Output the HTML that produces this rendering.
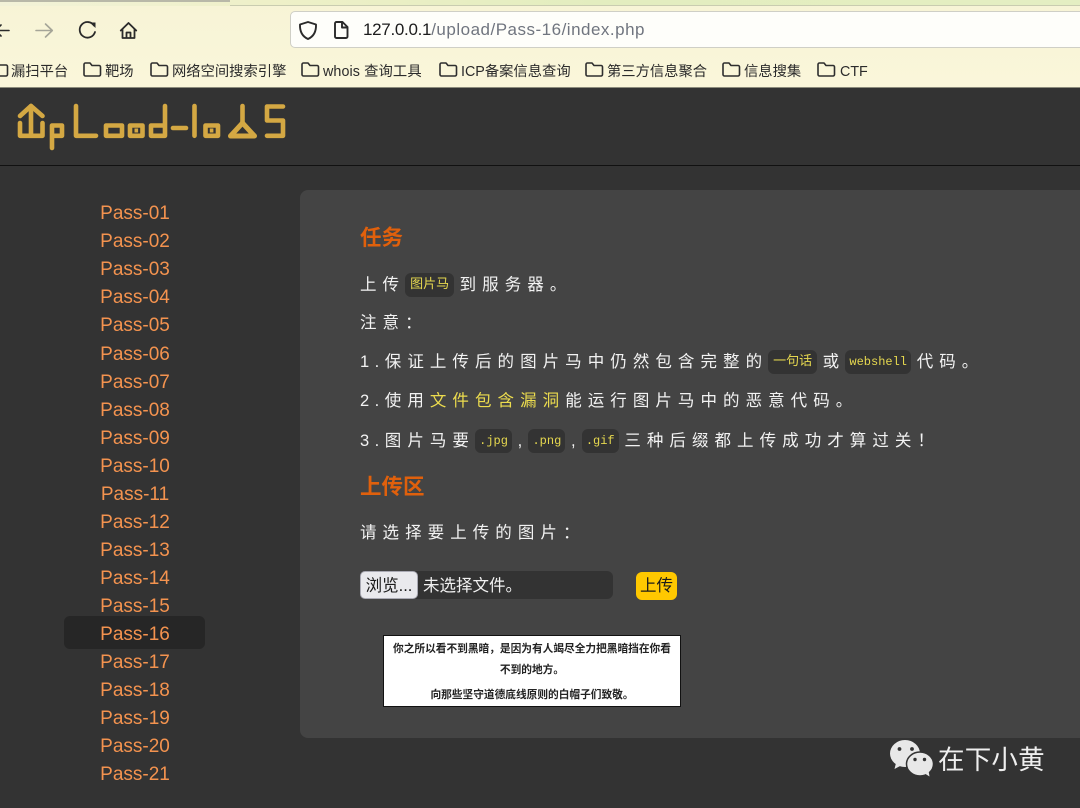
<!DOCTYPE html>
<html lang="zh"><head><meta charset="utf-8"><title>Upload-labs</title>
<style>
html,body{margin:0;padding:0;width:1080px;height:808px;overflow:hidden;background:#333}
body{position:relative;font-family:"Liberation Sans","Noto Sans CJK SC",sans-serif}
.a{position:absolute;white-space:nowrap}
.top{left:0;top:0;width:1080px;height:88px;background:linear-gradient(180deg,#f7f4d6 0,#faf6da 100%)}
.strip{left:0;top:0;width:1080px;height:6px;background:linear-gradient(90deg,#f2f2d8 0,#eef0c8 25%,#e3edbf 55%,#e4eec2 100%)}
.bm{top:62px;height:20px;line-height:20px;font-size:14.3px;color:#2b2b2b}
.nav{left:65px;width:140px;text-align:center;font-size:19px;line-height:28px;height:28px;color:#f4934f;margin-top:1px}
.t{left:360px;height:24px;line-height:24px;font-size:16.5px;letter-spacing:6.05px;color:#f2f2f2}
.t span.g{color:#ecdc4e}
.n{letter-spacing:5.5px}
.c{display:inline-block;background:#333;border-radius:6px;color:#e6d84f;font-family:"Liberation Mono","Noto Sans CJK SC",monospace;font-size:13px;letter-spacing:0;line-height:24px;height:24px;padding:0 5px;margin-right:5.5px;vertical-align:top;position:relative}
.m{font-size:12px;padding:0 4.2px}
.h{left:360px;font-size:21.5px;font-weight:bold;color:#e0600c;line-height:30px;height:30px}
.im{left:384px;width:296px;text-align:center;color:#222;font-weight:bold;font-size:10.7px;line-height:14px;height:14px}
</style></head><body>
<div class="a top"></div>
<div class="a strip"></div>
<div class="a" style="left:0;top:0;width:230px;height:2px;background:#b8b8a8"></div>
<div class="a" style="left:230px;top:5px;width:850px;height:1px;background:#c9ccb0"></div>

<svg class="a" style="left:0;top:16px" width="150" height="30" viewBox="0 16 150 30" fill="none" stroke="#2a2a2a" stroke-width="1.6" stroke-linecap="round" stroke-linejoin="round">
<path d="M-2 30.500H9M1 25l-5.500 5.500L1 36"/>
<path d="M36 30.500H52M45.500 24l6.800 6.500-6.800 6.500" stroke="#a5a598"/>
<path d="M94 25.500A7.800 7.800 0 1 0 95 32" stroke-width="1.800"/>
<path d="M90 22.500l5.500 0 0 5.500z" fill="#2a2a2a" stroke="none"/>
<path d="M120.800 30.500L128.500 23l7.700 7.500M122.500 29v9h12V29M126.500 38v-5.500h4V38" stroke-width="1.800"/>
</svg>

<div class="a" style="left:290px;top:11px;width:800px;height:37px;background:#fefefa;border:1px solid #cfcfc6;border-radius:5px;box-sizing:border-box"></div>
<svg class="a" style="left:296px;top:16px" width="60" height="28" viewBox="296 16 60 28" fill="none" stroke="#2a2a2a" stroke-width="1.900" stroke-linejoin="round">
<path d="M308 22l8 2.500c.3 7-2.500 12-8 14.500-5.500-2.500-8.300-7.500-8-14.500z"/>
<path d="M335 23.500a1.500 1.500 0 0 1 1.500-1.500h6l5 5v9.500a1.500 1.500 0 0 1-1.500 1.500h-9.500a1.500 1.500 0 0 1-1.500-1.500zM342 22v5.500h5.500"/>
</svg>
<div class="a" style="left:363px;top:18px;height:24px;line-height:24px;font-size:17px;letter-spacing:-.3px;color:#1c1c1c">127.0.0.1<span style="color:#70757f;letter-spacing:.5px">/upload/Pass-16/index.php</span></div>

<svg class="a" style="left:0;top:60px" width="860" height="20" viewBox="0 60 860 20" fill="none" stroke="#2e2e2e" stroke-width="1.600" stroke-linejoin="round">
<path d="M-9 64.500a1.500 1.500 0 0 1 1.500-1.500h4l2 2h7.500a1.500 1.500 0 0 1 1.500 1.500v8a1.500 1.500 0 0 1-1.500 1.500h-13.500z"/>
<path d="M84 64.500a1.500 1.500 0 0 1 1.500-1.500h4.500l2 2.500h7a1.500 1.500 0 0 1 1.500 1.500v7.500a1.500 1.500 0 0 1-1.500 1.500h-13.500a1.500 1.500 0 0 1-1.500-1.500z"/>
<path d="M151 64.500a1.500 1.500 0 0 1 1.500-1.500h4.500l2 2.500h7a1.500 1.500 0 0 1 1.500 1.500v7.500a1.500 1.500 0 0 1-1.500 1.500h-13.500a1.500 1.500 0 0 1-1.500-1.500z"/>
<path d="M302 64.500a1.500 1.500 0 0 1 1.500-1.500h4.500l2 2.500h7a1.500 1.500 0 0 1 1.500 1.500v7.500a1.500 1.500 0 0 1-1.500 1.500h-13.500a1.500 1.500 0 0 1-1.500-1.500z"/>
<path d="M440 64.500a1.500 1.500 0 0 1 1.500-1.500h4.500l2 2.500h7a1.500 1.500 0 0 1 1.500 1.500v7.500a1.500 1.500 0 0 1-1.500 1.500h-13.500a1.500 1.500 0 0 1-1.500-1.500z"/>
<path d="M586 64.500a1.500 1.500 0 0 1 1.500-1.500h4.500l2 2.500h7a1.500 1.500 0 0 1 1.500 1.500v7.500a1.500 1.500 0 0 1-1.500 1.500h-13.500a1.500 1.500 0 0 1-1.500-1.500z"/>
<path d="M723 64.500a1.500 1.500 0 0 1 1.500-1.500h4.500l2 2.500h7a1.500 1.500 0 0 1 1.500 1.500v7.500a1.500 1.500 0 0 1-1.500 1.500h-13.500a1.500 1.500 0 0 1-1.500-1.500z"/>
<path d="M818 64.500a1.500 1.500 0 0 1 1.500-1.500h4.500l2 2.500h7a1.500 1.500 0 0 1 1.500 1.500v7.500a1.500 1.500 0 0 1-1.500 1.500h-13.500a1.500 1.500 0 0 1-1.500-1.500z"/>
</svg>
<div class="a bm" style="left:11px">漏扫平台</div>
<div class="a bm" style="left:105px">靶场</div>
<div class="a bm" style="left:172px">网络空间搜索引擎</div>
<div class="a bm" style="left:323px;letter-spacing:.1px">whois 查询工具</div>
<div class="a bm" style="left:461px">ICP备案信息查询</div>
<div class="a bm" style="left:607px">第三方信息聚合</div>
<div class="a bm" style="left:744px">信息搜集</div>
<div class="a bm" style="left:840px">CTF</div>

<div class="a" style="left:0;top:87px;width:1080px;height:1px;background:#8c8c7c"></div>
<div class="a" style="left:0;top:88px;width:1080px;height:77px;background:#333"></div>
<div class="a" style="left:0;top:165px;width:1080px;height:1px;background:#111"></div>

<svg class="a" style="left:0;top:95px" width="300" height="60" viewBox="0 95 300 60" fill="none" stroke="#d4a843" stroke-width="4.600" stroke-linecap="round" stroke-linejoin="round">
<path d="M20 116L31 106 42.500 116"/>
<path d="M31 106V135.800M20 123V135.800H42.500V123"/>
<path d="M52 148V125.500H62V135.800H52"/>
<path d="M76 106V135.800H96"/>
<path d="M106 125.500H122V135.800H106Z"/>
<path d="M130 125.500H142.500V135.800H130Z"/>
<rect x="134.500" y="128.500" width="3.600" height="4" fill="#d4a843" stroke="none"/>
<path d="M165 106V135.800H151V125.500H165"/>
<path d="M173 128H186"/>
<path d="M194.500 106V135.800"/>
<path d="M205.500 125.500H218V135.800H205.500Z"/>
<rect x="209.800" y="128.500" width="3.600" height="4" fill="#d4a843" stroke="none"/>
<path d="M242.500 106V122"/>
<path d="M242.500 123L230.500 136H254.500Z" fill="#333" stroke-width="5"/>
<path d="M283 106.500H267V120.500H283V135.800H267"/>
</svg>

<div class="a" style="left:64px;top:616px;width:141px;height:33px;background:#262626;border-radius:6px"></div>
<div class="a nav" style="top:199px">Pass-01</div>
<div class="a nav" style="top:227px">Pass-02</div>
<div class="a nav" style="top:255px">Pass-03</div>
<div class="a nav" style="top:283px">Pass-04</div>
<div class="a nav" style="top:311px">Pass-05</div>
<div class="a nav" style="top:340px">Pass-06</div>
<div class="a nav" style="top:368px">Pass-07</div>
<div class="a nav" style="top:396px">Pass-08</div>
<div class="a nav" style="top:424px">Pass-09</div>
<div class="a nav" style="top:452px">Pass-10</div>
<div class="a nav" style="top:480px">Pass-11</div>
<div class="a nav" style="top:508px">Pass-12</div>
<div class="a nav" style="top:536px">Pass-13</div>
<div class="a nav" style="top:564px">Pass-14</div>
<div class="a nav" style="top:592px">Pass-15</div>
<div class="a nav" style="top:620px">Pass-16</div>
<div class="a nav" style="top:648px">Pass-17</div>
<div class="a nav" style="top:676px">Pass-18</div>
<div class="a nav" style="top:704px">Pass-19</div>
<div class="a nav" style="top:732px">Pass-20</div>
<div class="a nav" style="top:760px">Pass-21</div>

<div class="a" style="left:300px;top:190px;width:800px;height:548px;background:#444;border-radius:8px"></div>

<div class="a h" style="top:223px">任务</div>
<div class="a t" style="top:273px">上传<span class="c">图片马</span>到服务器。</div>
<div class="a t" style="top:311px">注意：</div>
<div class="a t" style="top:350px"><span class="n">1.</span>保证上传后的图片马中仍然包含完整的<span class="c">一句话</span>或<span class="c m">webshell</span>代码。</div>
<div class="a t" style="top:389px"><span class="n">2.</span>使用<span class="g">文件包含漏洞</span>能运行图片马中的恶意代码。</div>
<div class="a t" style="top:429px"><span class="n">3.</span>图片马要<span class="c m">.jpg</span>,<span class="c m">.png</span>,<span class="c m">.gif</span>三种后缀都上传成功才算过关！</div>
<div class="a h" style="top:472px">上传区</div>
<div class="a t" style="top:521px">请选择要上传的图片：</div>

<div class="a" style="left:360px;top:571px;width:253px;height:28px;background:#333;border-radius:6px"></div>
<div class="a" style="left:360px;top:571px;width:58px;height:28px;background:#e9e9ed;border:1px solid #aaaab4;box-sizing:border-box;border-radius:5px;text-align:center;line-height:28px;font-size:16.5px;color:#1a1a1a">浏览...</div>
<div class="a" style="left:423px;top:572px;height:28px;line-height:28px;font-size:16.5px;color:#f0f0f0">未选择文件。</div>
<div class="a" style="left:636px;top:572px;width:41px;height:28px;background:#ffc800;border-radius:6px;text-align:center;line-height:28px;font-size:16.5px;color:#1a1a1a">上传</div>

<div class="a" style="left:383px;top:635px;width:298px;height:72px;background:#fff;border:1px solid #111;box-sizing:border-box"></div>
<div class="a im" style="top:642px">你之所以看不到黑暗，是因为有人竭尽全力把黑暗挡在你看</div>
<div class="a im" style="top:663px">不到的地方。</div>
<div class="a im" style="top:688px">向那些坚守道德底线原则的白帽子们致敬。</div>

<svg class="a" style="left:887px;top:736px" width="50" height="44" viewBox="886 736 50 44">
<ellipse cx="904" cy="753.500" rx="15" ry="13.500" fill="#e8e8e8"/>
<path d="M895 763l-1.500 6 6.500-3.500z" fill="#e8e8e8"/>
<ellipse cx="919" cy="764" rx="13.500" ry="12" fill="#e8e8e8" stroke="#333" stroke-width="1.500"/>
<path d="M923 773l5.500 3.500-1-6z" fill="#e8e8e8"/>
<circle cx="898.500" cy="749" r="1.900" fill="#333"/><circle cx="911" cy="749" r="1.900" fill="#333"/>
<circle cx="914" cy="759.500" r="1.700" fill="#333"/><circle cx="923.500" cy="759.500" r="1.700" fill="#333"/>
</svg>
<div class="a" style="left:938px;top:742px;height:36px;line-height:36px;font-size:26.5px;letter-spacing:.2px;color:#eee">在下小黄</div>
</body></html>
